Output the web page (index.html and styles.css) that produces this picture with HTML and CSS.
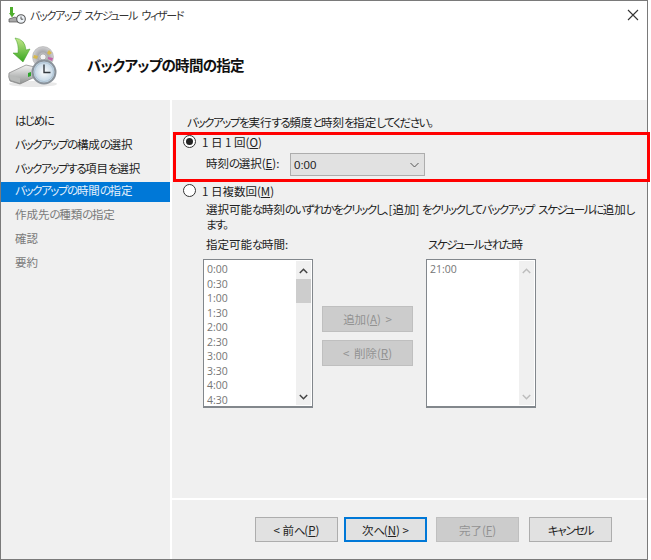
FILE: index.html
```html
<!DOCTYPE html>
<html lang="ja">
<head>
<meta charset="utf-8">
<title>バックアップ スケジュール ウィザード</title>
<link rel="stylesheet" href="styles.css">
</head>
<body>
<div class="window">
  <div class="titlebar">
    <svg class="title-icon" width="18" height="17" viewBox="0 0 18 17">
      <path d="M2 0h3v6h2l-3 4.500L1 6h1z" fill="#4fae2e"/>
      <path d="M1 12l6-2 3 2v3H1z" fill="#a8a8a8" stroke="#555" stroke-width=".7"/>
      <circle cx="13" cy="12" r="4.300" fill="#eef3f8" stroke="#555" stroke-width="1.100"/>
      <path d="M13 9.500v2.700h2.200" fill="none" stroke="#444" stroke-width=".9"/>
    </svg>
    <span class="title-text">バックアップ スケジュール ウィザード</span>
    <svg class="close" width="12" height="12" viewBox="0 0 12 12"><path d="M1 1l10 10M11 1L1 11" stroke="#333" stroke-width="1.100" fill="none"/></svg>
  </div>
  <div class="header">
    <svg class="wizard-icon" width="56" height="56" viewBox="0 0 56 56">
      <defs>
        <linearGradient id="arrow" x1="0" y1="0" x2="0" y2="1"><stop offset="0" stop-color="#c4e88a"/><stop offset="1" stop-color="#37a51f"/></linearGradient>
        <linearGradient id="drive" x1="0" y1="0" x2="0" y2="1"><stop offset="0" stop-color="#f4f4f4"/><stop offset="1" stop-color="#8f9291"/></linearGradient>
        <radialGradient id="disc"><stop offset="0" stop-color="#e8e8e8"/><stop offset=".5" stop-color="#a9a9ac"/><stop offset="1" stop-color="#d2d2d4"/></radialGradient>
        <radialGradient id="clock"><stop offset="0" stop-color="#fdfeff"/><stop offset="1" stop-color="#b9cfe0"/></radialGradient>
      </defs>
      <ellipse cx="26" cy="49" rx="24" ry="3" fill="#e8e8e8"/>
      <circle cx="36" cy="22" r="10.500" fill="url(#disc)" stroke="#a0a0a0" stroke-width=".5"/>
      <path d="M27 20l4 1-1 3-4-1zM42 15l3 3-3 2-2-2z" fill="#d6b84e"/>
      <path d="M41 22l5 1-1 3-4-2z" fill="#c565a8"/>
      <circle cx="36" cy="22" r="3" fill="#f5f5f5" stroke="#888" stroke-width=".5"/>
      <path d="M2 38l17-8 9 2v10l-15 7-10-3q-2-4-1-8z" fill="url(#drive)" stroke="#808080" stroke-width=".7"/>
      <path d="M3 40l10 3v5l-9-3q-2-2-1-5z" fill="#b9bbba"/>
      <path d="M21 38l3-1v4l-3 1z" fill="#2da52a"/>
      <path d="M8 3q10 1 11 12l4-1-7 13L6 18l5 0Q12 9 8 3z" fill="url(#arrow)" stroke="#3e9c27" stroke-width=".5"/>
      <circle cx="37" cy="37" r="11.500" fill="url(#clock)" stroke="#8a929a" stroke-width="2"/>
      <circle cx="37" cy="37" r="9.500" fill="none" stroke="#9eb3c4" stroke-width=".6"/>
      <path d="M37 29.500v8h6.500" fill="none" stroke="#33393f" stroke-width="1.400"/>
    </svg>
    <h1 class="heading">バックアップの時間の指定</h1>
  </div>
  <div class="main">
    <nav class="sidebar">
      <div class="step"><span class="k">はじめに</span></div>
      <div class="step"><span><span class="k">バックアップの</span>構成<span class="k">の</span>選択</span></div>
      <div class="step"><span><span class="k">バックアップする</span>項目<span class="k">を</span>選択</span></div>
      <div class="step current"><span><span class="k">バックアップの</span>時間<span class="k">の</span>指定</span></div>
      <div class="step muted"><span>作成先<span class="k">の</span>種類<span class="k">の</span>指定</span></div>
      <div class="step muted">確認</div>
      <div class="step muted">要約</div>
    </nav>
    <div class="panel">
      <div class="content">
        <p class="intro"><span class="k">バックアップを</span>実行<span class="k">する</span>頻度<span class="k">と</span>時刻<span class="k">を</span>指定<span class="k">してください。</span></p>
        <div class="radio-row first"><span class="radio checked"></span><span class="radio-label">1 日 1 回(<u>O</u>)</span></div>
        <div class="time-row">
          <span class="time-label">時刻<span class="k">の</span>選択(<u>E</u>):</span>
          <div class="select"><span>0:00</span>
            <svg width="9" height="6" viewBox="0 0 9 6"><path d="M.5 1l4 4 4-4" fill="none" stroke="#555" stroke-width="1"/></svg>
          </div>
        </div>
        <div class="radio-row second"><span class="radio"></span><span class="radio-label">1 日複数回(<u>M</u>)</span></div>
        <p class="description">選択可能<span class="k">な</span>時刻<span class="k">のいずれかをクリックし、</span>[追加] <span class="k">をクリックしてバックアップ スケジュールに</span>追加<span class="k">し</span><br><span class="k">ます。</span></p>
        <div class="lists">
          <div class="list-col">
            <div class="list-title">指定可能<span class="k">な</span>時間:</div>
            <div class="listbox">
              <div class="items">
                <div>0:00</div><div>0:30</div><div>1:00</div><div>1:30</div><div>2:00</div><div>2:30</div><div>3:00</div><div>3:30</div><div>4:00</div><div>4:30</div>
              </div>
              <div class="scrollbar">
                <svg width="9" height="6" viewBox="0 0 9 6"><path d="M.8 5l3.700-3.700L8.200 5" fill="none" stroke="#444" stroke-width="1.500"/></svg>
                <div class="thumb"></div>
                <svg class="down" width="9" height="6" viewBox="0 0 9 6"><path d="M.8 1l3.700 3.700L8.200 1" fill="none" stroke="#444" stroke-width="1.500"/></svg>
              </div>
            </div>
          </div>
          <div class="move-buttons">
            <div class="move-btn">追加(<u>A</u>) &gt;</div>
            <div class="move-btn">&lt; 削除(<u>R</u>)</div>
          </div>
          <div class="list-col">
            <div class="list-title scheduled"><span class="k">スケジュールされた</span>時</div>
            <div class="listbox">
              <div class="items"><div>21:00</div></div>
              <div class="scrollbar">
                <svg width="9" height="6" viewBox="0 0 9 6"><path d="M.8 5l3.700-3.700L8.200 5" fill="none" stroke="#bdbdbd" stroke-width="1.500"/></svg>
                <svg class="down" width="9" height="6" viewBox="0 0 9 6"><path d="M.8 1l3.700 3.700L8.200 1" fill="none" stroke="#bdbdbd" stroke-width="1.500"/></svg>
              </div>
            </div>
          </div>
        </div>
      </div>
      <div class="footer">
        <div class="btn">&lt; 前<span class="k">へ</span>(<u>P</u>)</div>
        <div class="btn primary">次<span class="k">へ</span>(<u>N</u>) &gt;</div>
        <div class="btn disabled">完了(<u>F</u>)</div>
        <div class="btn cancel"><span class="k">キャンセル</span></div>
      </div>
    </div>
  </div>
  <div class="highlight"></div>
</div>
</body>
</html>
```
FILE: styles.css
```css
* { box-sizing: border-box; }
html, body { margin: 0; background: #fff; }
body { width: 651px; height: 560px; overflow: hidden; }
.window {
  position: relative;
  width: 648px;
  height: 560px;
  border: 1px solid #7a7a7a;
  background: #fff;
  display: flex;
  flex-direction: column;
  font-family: "Noto Sans CJK JP", "Noto Sans", sans-serif;
  font-size: 11.500px;
  line-height: 16px;
  font-feature-settings: "palt";
  color: #222;
}
u { text-underline-offset: 1px; }
.k { letter-spacing: -1.400px; word-spacing: 3px; }
.titlebar { height: 28px; display: flex; align-items: center; padding: 0 8px 0 7px; flex: none; }
.title-icon { margin-right: 4px; flex: none; }
.title-text { font-size: 11px; letter-spacing: -1.300px; word-spacing: 3px; color: #333; flex: 1; }
.close { flex: none; }
.header { height: 71px; flex: none; display: flex; align-items: center; padding-left: 6px; }
.wizard-icon { flex: none; margin-top: -4px; }
.heading { margin: 0 0 0 24px; font-size: 14.500px; letter-spacing: -.7px; font-weight: 700; line-height: 20px; color: #111; }
.main { flex: 1; display: flex; min-height: 0; }
.sidebar { width: 169px; flex: none; background: #f0f0f0; padding-top: 8px; }
.step { height: 24px; padding-left: 14px; display: flex; align-items: center; color: #222; }
.step.current { height: 20px; margin-top: 2px; padding-bottom: 4px; background: #0078d7; color: #e6f1fb; }
.step.muted { color: #7a7a7a; }
.panel { flex: 1; margin-left: 2px; background: #f0f0f0; display: flex; flex-direction: column; }
.content { flex: 1; padding: 14px 0 0 11px; border-bottom: 2px solid #fff; }
.intro { margin: 0 0 0 4px; height: 17px; }
.radio-row { display: flex; align-items: center; gap: 6px; height: 17px; }
.radio-row.first { margin-top: 2px; }
.radio-row.second { margin-top: 6px; }
.radio { width: 13px; height: 13px; border: 1px solid #333; border-radius: 50%; background: #fff; display: flex; align-items: center; justify-content: center; flex: none; }
.radio.checked::after { content: ""; width: 7px; height: 7px; border-radius: 50%; background: #222; }
.time-row { display: flex; align-items: center; height: 23px; padding-left: 23px; margin-top: 3px; }
.time-label { width: 84px; flex: none; padding-bottom: 3px; }
.select { width: 135px; height: 23px; background: #e1e1e1; border: 1px solid #adadad; display: flex; align-items: center; justify-content: space-between; padding: 0 5px 0 3px; font-family: "Liberation Sans", sans-serif; font-size: 11.500px; }
.description { margin: 3px 0 0 23px; white-space: nowrap; height: 30px; line-height: 15px; }
.lists { display: flex; margin: 4px 0 0 20px; }
.list-col { width: 110px; flex: none; }
.list-title { height: 18px; margin-bottom: 5px; padding-left: 3px; }
.list-title.scheduled { padding-left: 2px; }
.listbox { width: 110px; height: 149px; border: 1px solid #82878c; border-width: 1px 1px 2px; background: #fff; display: flex; }
.items { flex: 1; padding: 2px 0 0 3px; font-family: "Open Sans", sans-serif; font-size: 10.500px; line-height: 14.500px; color: #757575; }
.scrollbar { width: 15px; flex: none; background: #f0f0f0; display: flex; flex-direction: column; align-items: center; padding: 7px 0 5px; margin: 1px 1px 1px 0; }
.thumb { width: 15px; height: 24px; background: #cdcdcd; margin-top: 5px; }
.down { margin-top: auto; }
.move-buttons { width: 91px; margin: 0 13px 0 9px; padding-top: 70px; display: flex; flex-direction: column; gap: 8px; flex: none; }
.move-btn { height: 26px; background: #cccccc; border: 1px solid #bfbfbf; color: #929292; display: flex; align-items: center; justify-content: center; word-spacing: 2px; }
.footer { height: 59px; flex: none; display: flex; justify-content: flex-end; padding: 17px 35px 0 0; }
.btn { width: 83px; height: 25px; background: #e1e1e1; border: 1px solid #adadad; display: flex; align-items: center; justify-content: center; margin-left: 6px; color: #222; white-space: pre; }
.btn.primary { border: 2px solid #0078d7; }
.btn.disabled { background: #cccccc; border-color: #bfbfbf; color: #929292; margin-left: 9px; }
.btn.cancel { margin-left: 10px; }
.highlight { position: absolute; left: 172px; top: 131px; width: 477px; height: 50px; border: 3px solid #f00; pointer-events: none; }
```
